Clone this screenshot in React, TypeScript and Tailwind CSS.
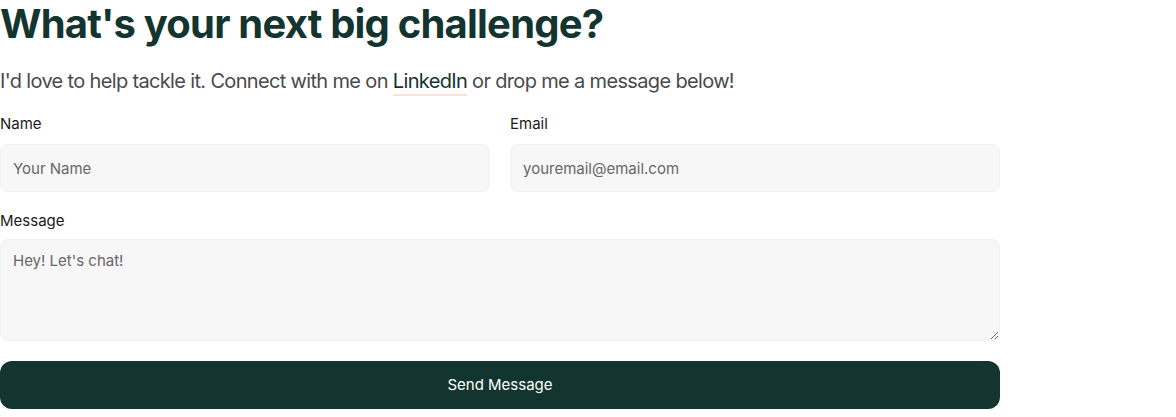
import React from 'react';

const font = { fontFamily: '"Inter", "Liberation Sans", sans-serif' };

const App: React.FC = () => {
  return (
    <div className="w-[1176px] h-[417px] bg-white overflow-hidden" style={font}>
      <div className="w-[1000px]">
        <h2 className="text-[40px] leading-[48px] font-bold text-[#14352f] tracking-[-0.02em]">
          What's your next big challenge?
        </h2>
        <p className="mt-[19px] text-[20px] leading-[28px] text-[#4a4a4a] tracking-[-0.033em]">
          I'd love to help tackle it. Connect with me on{' '}
          <a href="#" className="text-[#14352f] underline decoration-[#fde0dc] underline-offset-[6px]">
            LinkedIn
          </a>{' '}
          or drop me a message below!
        </p>
        <form className="mt-[17px]" onSubmit={(e) => e.preventDefault()}>
          <div className="grid grid-cols-2 gap-5">
            <div>
              <label className="block text-[15px] leading-6 text-[#1a1a1a] mb-2">Name</label>
              <input
                type="text"
                placeholder="Your Name"
                className="w-full h-12 px-3 rounded-lg bg-[#f7f7f7] border border-[#f0f0f0] text-[15px] placeholder:text-[#666] outline-none"
              />
            </div>
            <div>
              <label className="block text-[15px] leading-6 text-[#1a1a1a] mb-2">Email</label>
              <input
                type="email"
                placeholder="youremail@email.com"
                className="w-full h-12 px-3 rounded-lg bg-[#f7f7f7] border border-[#f0f0f0] text-[15px] placeholder:text-[#666] outline-none"
              />
            </div>
          </div>
          <div className="mt-[17px]">
            <label className="block text-[15px] leading-6 text-[#1a1a1a] mb-[6px]">Message</label>
            <textarea
              placeholder="Hey! Let's chat!"
              className="block w-full h-[102px] px-3 py-[10px] rounded-lg bg-[#f7f7f7] border border-[#f0f0f0] text-[15px] placeholder:text-[#666] outline-none"
            />
          </div>
          <button
            type="submit"
            className="mt-5 w-full h-12 rounded-xl bg-[#133530] text-white text-[15px]"
          >
            Send Message
          </button>
        </form>
      </div>
    </div>
  );
};

export default App;
